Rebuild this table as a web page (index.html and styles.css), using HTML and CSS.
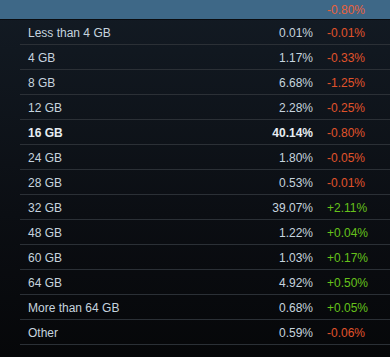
FILE: index.html
```html
<!DOCTYPE html>
<html>
<head>
<meta charset="utf-8">
<link rel="stylesheet" href="styles.css">
</head>
<body>
<div class="header">
  <span class="spacer"></span>
  <span class="change neg head">-0.80%</span>
</div>
<div class="table">
  <div class="row"><span class="label">Less than 4 GB</span><span class="pct">0.01%</span><span class="change neg">-0.01%</span></div>
  <div class="row"><span class="label">4 GB</span><span class="pct">1.17%</span><span class="change neg">-0.33%</span></div>
  <div class="row"><span class="label">8 GB</span><span class="pct">6.68%</span><span class="change neg">-1.25%</span></div>
  <div class="row"><span class="label">12 GB</span><span class="pct">2.28%</span><span class="change neg">-0.25%</span></div>
  <div class="row bold"><span class="label">16 GB</span><span class="pct">40.14%</span><span class="change neg">-0.80%</span></div>
  <div class="row"><span class="label">24 GB</span><span class="pct">1.80%</span><span class="change neg">-0.05%</span></div>
  <div class="row"><span class="label">28 GB</span><span class="pct">0.53%</span><span class="change neg">-0.01%</span></div>
  <div class="row"><span class="label">32 GB</span><span class="pct">39.07%</span><span class="change pos">+2.11%</span></div>
  <div class="row"><span class="label">48 GB</span><span class="pct">1.22%</span><span class="change pos">+0.04%</span></div>
  <div class="row"><span class="label">60 GB</span><span class="pct">1.03%</span><span class="change pos">+0.17%</span></div>
  <div class="row"><span class="label">64 GB</span><span class="pct">4.92%</span><span class="change pos">+0.50%</span></div>
  <div class="row"><span class="label">More than 64 GB</span><span class="pct">0.68%</span><span class="change pos">+0.05%</span></div>
  <div class="row"><span class="label">Other</span><span class="pct">0.59%</span><span class="change neg">-0.06%</span></div>
</div>
</body>
</html>
```
FILE: styles.css
```css
html, body {
  margin: 0;
  padding: 0;
}
body {
  width: 390px;
  height: 357px;
  overflow: hidden;
  font-family: Arial, "Liberation Sans", sans-serif;
  font-size: 12px;
  color: #c6d4df;
  background: linear-gradient(180deg, #131b24 0%, #0b0e13 60%, #060709 100%);
}
.header {
  height: 19px;
  background: #3e6887;
  border-bottom: 1px solid #0a0c0f;
  display: flex;
  align-items: center;
}
.header .spacer {
  flex: 1;
}
.table {
  margin-left: 20px;
}
.row {
  box-sizing: border-box;
  height: 25px;
  padding-top: 1px;
  border-bottom: 1px solid #2b3036;
  display: flex;
  align-items: center;
}
.label {
  flex: 1;
  padding-left: 8px;
}
.pct {
  text-align: right;
}
.change {
  width: 63px;
  padding-left: 14px;
  flex: none;
}
.neg {
  color: #e0532b;
}
.pos {
  color: #66c21b;
}
.head {
  color: #e9603a;
}
.bold {
  font-weight: bold;
  color: #e6edf3;
}
.bold .change {
  font-weight: normal;
}
```
